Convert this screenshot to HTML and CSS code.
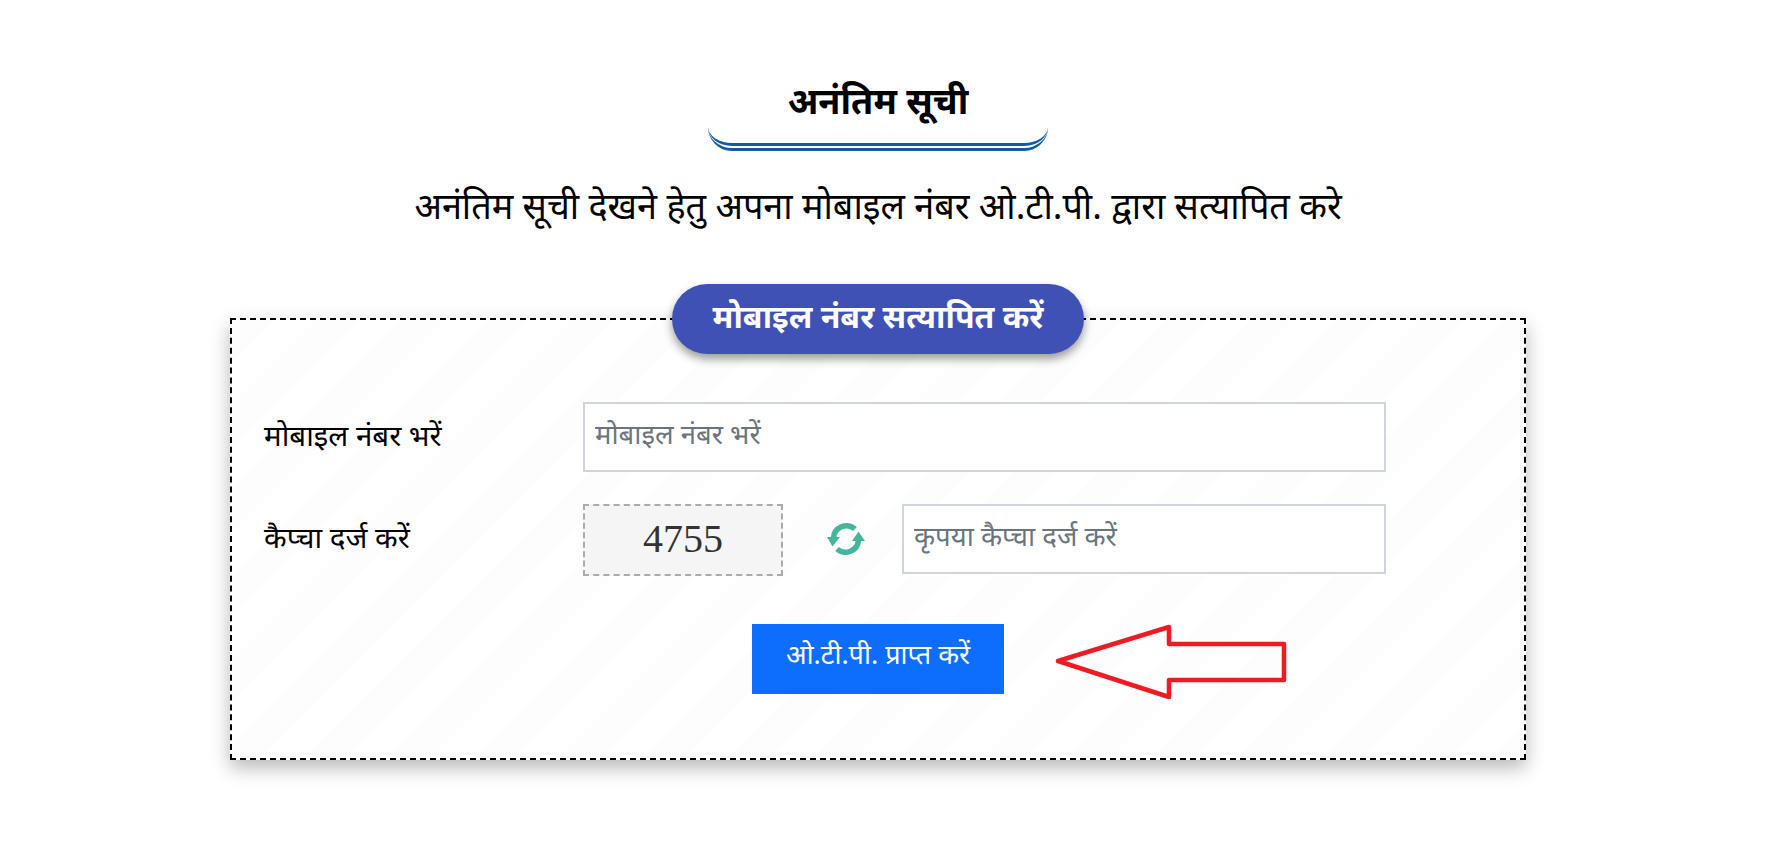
FILE: index.html
```html
<!DOCTYPE html>
<html lang="hi">
<head>
    <meta charset="UTF-8">
    <meta name="viewport" content="width=device-width, initial-scale=1.0">
    <title>अनंतिम सूची</title>
    <link rel="stylesheet" href="styles.css">
</head>
<body>
    <div class="container">
        <div class="page-title">
            <h1>अनंतिम सूची</h1>
        </div>
        <p class="subtitle">अनंतिम सूची देखने हेतु अपना मोबाइल नंबर ओ.टी.पी. द्वारा सत्यापित करे</p>

        <div class="verify-box">
            <h2 class="box-title">मोबाइल नंबर सत्यापित करें</h2>
            <form class="verify-form">
                <div class="form-row">
                    <label for="mobile">मोबाइल नंबर भरें</label>
                    <input type="text" id="mobile" class="form-input" placeholder="मोबाइल नंबर भरें">
                </div>
                <div class="form-row captcha-row">
                    <label for="captcha">कैप्चा दर्ज करें</label>
                    <div class="captcha-code">4755</div>
                    <button type="button" class="refresh-button" aria-label="refresh">
                        <svg viewBox="0 0 40 34" width="40" height="34">
                            <path d="M7.5 16 A13 13 0 0 1 29 7" class="refresh-arc"/>
                            <path d="M32.5 18 A13 13 0 0 1 11 27" class="refresh-arc"/>
                            <path d="M1 15 L14 15 L6.5 24.5 Z" class="refresh-head"/>
                            <path d="M26 19 L39 19 L32.5 9.5 Z" class="refresh-head"/>
                        </svg>
                    </button>
                    <input type="text" id="captcha" class="form-input" placeholder="कृपया कैप्चा दर्ज करें">
                </div>
                <div class="button-row">
                    <button type="submit" class="submit-button">ओ.टी.पी. प्राप्त करें</button>
                    <svg class="red-arrow" viewBox="0 0 233 78" width="233" height="78">
                        <path d="M4 38 L115 4 L115 21 L230 21 L230 57 L115 57 L115 74 Z"/>
                    </svg>
                </div>
            </form>
        </div>
    </div>
</body>
</html>
```

FILE: styles.css
```css
* {
    margin: 0;
    padding: 0;
    box-sizing: border-box;
}

body {
    background: #fff;
    color: #000;
    font-family: "Noto Sans", "DejaVu Sans", "Liberation Serif", sans-serif;
    padding-right: 11px;
}

.container {
    width: 1296px;
    margin: 0 auto;
    padding: 70px 0 60px;
}

.page-title {
    width: 340px;
    height: 81px;
    margin: 0 auto;
    border-bottom: 8px double #0d5aa7;
    border-radius: 0 0 24px 24px;
    text-align: center;
}

.page-title h1 {
    font-size: 36px;
    font-weight: 700;
    line-height: 62px;
}

.subtitle {
    margin-top: 27px;
    font-size: 36px;
    line-height: 56px;
    text-align: center;
}

.verify-box {
    position: relative;
    height: 442px;
    margin-top: 84px;
    padding: 82px 32px 0;
    border: 2px dashed #000;
    background: repeating-linear-gradient(135deg, #fdfdfd 0, #fdfdfd 30px, #fff 30px, #fff 60px);
    box-shadow: 0 8px 18px rgba(0,0,0,0.28);
}

.box-title {
    position: absolute;
    top: -36px;
    left: 50%;
    width: 412px;
    height: 70px;
    transform: translateX(-50%);
    border-radius: 35px;
    background: #3f51b5;
    color: #fff;
    font-size: 32px;
    font-weight: 700;
    line-height: 64px;
    text-align: center;
    box-shadow: 0 5px 10px rgba(0,0,0,0.4);
}

.form-row {
    display: flex;
    align-items: flex-start;
    margin-bottom: 32px;
}

.form-row label {
    width: 319px;
    font-size: 29.5px;
    line-height: 66px;
}

.form-input {
    width: 803px;
    height: 70px;
    padding: 0 10px 8px;
    border: 2px solid #ced4da;
    background: #fff;
    font-family: inherit;
    font-size: 27.5px;
    color: #495057;
}

.form-input::placeholder {
    color: #6c757d;
}

.captcha-row {
    margin-bottom: 48px;
}

.captcha-row .form-input {
    width: 484px;
}

.captcha-code {
    width: 200px;
    height: 72px;
    border: 2px dashed #aaa;
    background: #f5f5f5;
    color: #333;
    font-family: "Liberation Serif", serif;
    font-size: 40px;
    line-height: 66px;
    text-align: center;
}

.refresh-button {
    width: 119px;
    height: 72px;
    padding-left: 6px;
    border: none;
    background: none;
    text-align: center;
}

.refresh-arc {
    fill: none;
    stroke: #45b69c;
    stroke-width: 5.5;
}

.refresh-head {
    fill: #45b69c;
}

.button-row {
    position: relative;
    display: flex;
    justify-content: center;
}

.submit-button {
    width: 252px;
    height: 70px;
    padding-bottom: 12px;
    border: none;
    background: #0d6efd;
    color: #fff;
    font-family: inherit;
    font-size: 27px;
}

.red-arrow {
    position: absolute;
    top: -1px;
    left: 790px;
    fill: none;
    stroke: #ed1c24;
    stroke-width: 4.5;
    stroke-linejoin: round;
}
```
